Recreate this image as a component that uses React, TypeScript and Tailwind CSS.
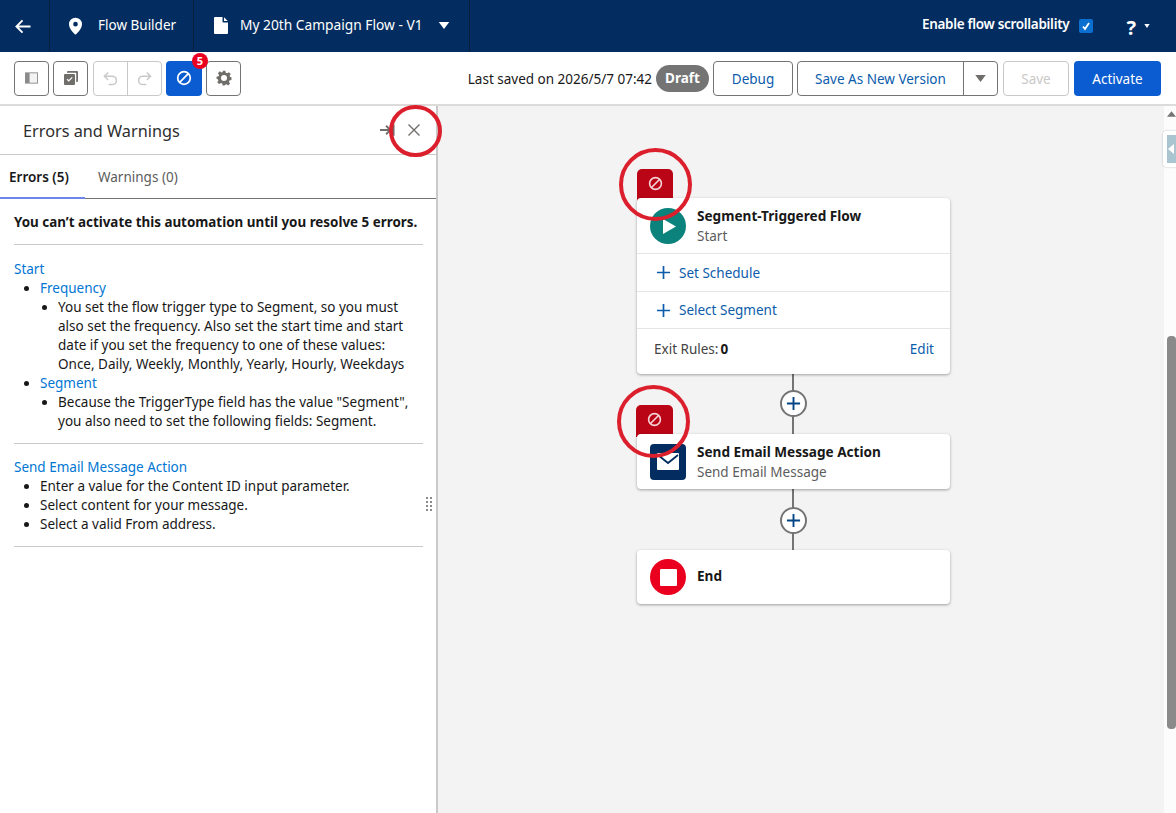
import type { ReactNode } from 'react'

function BlockIcon({ className }: { className: string }) {
  return (
    <svg viewBox="0 0 16 16" className={className} fill="none" stroke="currentColor" strokeWidth="1.7">
      <circle cx="8" cy="8" r="6.3" />
      <path d="M3.7 12.3 12.3 3.7" />
    </svg>
  )
}

function Plus({ className, weight = 1.6 }: { className: string; weight?: number }) {
  return (
    <svg viewBox="0 0 16 16" className={className} fill="none" stroke="currentColor" strokeWidth={weight}>
      <path d="M8 1v14M1 8h14" />
    </svg>
  )
}

function Ring({ className }: { className: string }) {
  return <div className={`absolute z-20 rounded-full border-[4px] border-[#dc1f2c] ${className}`} />
}

function ToolButton({ children }: { children: ReactNode }) {
  return (
    <button className="flex h-[35px] w-[35px] items-center justify-center rounded-[4px] border border-[#747474] bg-white text-[#706e6b]">
      {children}
    </button>
  )
}

function AddRow({ label }: { label: string }) {
  return (
    <div className="flex h-[37.5px] items-center border-t border-[#e5e5e5] pl-[19px] pt-[1px] text-[13.5px] text-[#0b5cab]">
      <Plus className="mr-[8px] h-[15px] w-[15px]" weight={1.8} />
      {label}
    </div>
  )
}

function Connector({ className }: { className: string }) {
  return (
    <div className={`absolute left-[354px] w-[2px] bg-[#747474] ${className}`} />
  )
}

function PlusNode({ className }: { className: string }) {
  return (
    <div className={`absolute left-[342px] flex h-[27px] w-[27px] items-center justify-center rounded-full border-2 border-[#747474] bg-white text-[#014486] ${className}`}>
      <Plus className="h-[15px] w-[15px]" weight={2} />
    </div>
  )
}

export default function App() {
  return (
    <div className="relative flex h-[813px] w-[1176px] flex-col overflow-hidden bg-white font-['Noto_Sans','Open_Sans',sans-serif] text-[13.5px] text-[#181818]">
      <header className="flex h-[52px] shrink-0 items-center bg-[#032d60] text-[13.5px] text-white">
        <div className="flex h-full w-[50px] items-center justify-center border-r border-[#0a1f3c] pr-[4px]">
          <svg viewBox="0 0 18 16" className="h-[15px] w-[18px]" fill="none" stroke="currentColor" strokeWidth="2">
            <path d="M17 8H2M8.5 1.500 2 8l6.500 6.500" />
          </svg>
        </div>
        <div className="flex h-full w-[144px] items-center border-r border-[#0a1f3c] pb-[1px] pl-[19px]">
          <svg viewBox="0 0 14 18" className="mr-[16px] h-[18px] w-[13px]" fill="currentColor">
            <path fillRule="evenodd" d="M7 0a7 7 0 0 0-7 7c0 4.400 5 9.600 6.400 10.800a.9.9 0 0 0 1.200 0C9 16.600 14 11.400 14 7a7 7 0 0 0-7-7Zm0 9.500a2.500 2.500 0 1 1 0-5 2.500 2.500 0 0 1 0 5Z" />
          </svg>
          Flow Builder
        </div>
        <div className="flex h-full w-[276px] items-center border-r border-[#0a1f3c] pb-[1px] pl-[20px] text-[13.75px]">
          <svg viewBox="0 0 14 17" className="mr-[12px] h-[17px] w-[14px]" fill="currentColor">
            <path d="M1 0h7.500v4.500a1 1 0 0 0 1 1H14V16a1 1 0 0 1-1 1H1a1 1 0 0 1-1-1V1a1 1 0 0 1 1-1Z" />
            <path d="M10 .3 13.700 4H10Z" />
          </svg>
          My 20th Campaign Flow - V1
          <svg viewBox="0 0 12 8" className="ml-[15px] h-[7px] w-[12px]" fill="currentColor">
            <path d="M0 0h12L6 8Z" />
          </svg>
        </div>
        <div className="ml-auto flex items-center">
          <span className="mb-[3px] text-[13.5px] font-semibold tracking-[-0.3px]">Enable flow scrollability</span>
          <span className="ml-[10px] flex h-[14px] w-[14px] items-center justify-center rounded-[2px] bg-[#0b6fd0]">
            <svg viewBox="0 0 10 10" className="h-[10px] w-[10px]" fill="none" stroke="white" strokeWidth="1.8">
              <path d="M2 5.500 4 8l4-6" />
            </svg>
          </span>
          <span className="ml-[33px] mt-[4px] text-[20px] font-bold leading-none">?</span>
          <svg viewBox="0 0 8 6" className="ml-[8px] mr-[26px] h-[4px] w-[6px]" fill="currentColor">
            <path d="M0 0h8L4 6Z" />
          </svg>
        </div>
      </header>

      <div className="flex h-[54px] shrink-0 items-center border-b-2 border-[#dddbda] pl-[14px] pr-[15px]">
        <ToolButton>
          <svg viewBox="0 0 14 12" className="h-[12px] w-[13px]">
            <rect x="0.500" y="0.500" width="13" height="11" fill="#a5a5a5" stroke="#8a8a8a" />
            <rect x="1" y="1" width="4" height="10" fill="#8a8a8a" />
            <rect x="5" y="1" width="8" height="10" fill="#f3f3f3" />
          </svg>
        </ToolButton>
        <div className="ml-[4px]">
          <ToolButton>
            <svg viewBox="0 0 14 14" className="h-[14px] w-[14px]" fill="#706e6b">
              <path d="M4 0h9a1 1 0 0 1 1 1v9a1 1 0 0 1-1 1h-.8V2.500A.8.8 0 0 0 11.500 1.800H3V1a1 1 0 0 1 1-1Z" />
              <path fillRule="evenodd" d="M1 3h9a1 1 0 0 1 1 1v9a1 1 0 0 1-1 1H1a1 1 0 0 1-1-1V4a1 1 0 0 1 1-1Zm1.600 5.500 2.100 2.200 3.900-4-.8-.8-3.100 3.200-1.300-1.400Z" />
            </svg>
          </ToolButton>
        </div>
        <div className="ml-[5px] flex h-[35px] w-[69px] rounded-[4px] border border-[#c9c9c9] text-[#c9c9c9]">
          <div className="flex flex-1 items-center justify-center border-r border-[#c9c9c9]">
            <svg viewBox="0 0 16 16" className="h-[15px] w-[15px]" fill="none" stroke="currentColor" strokeWidth="1.6">
              <path d="M5.500 1.500 1.500 5.500l4 4M1.800 5.500h8a4.500 4.500 0 0 1 0 9H6" />
            </svg>
          </div>
          <div className="flex flex-1 items-center justify-center">
            <svg viewBox="0 0 16 16" className="h-[15px] w-[15px]" fill="none" stroke="currentColor" strokeWidth="1.6">
              <path d="m10.500 1.500 4 4-4 4M14.200 5.500h-8a4.500 4.500 0 0 0 0 9H10" />
            </svg>
          </div>
        </div>
        <div className="relative ml-[4px] flex h-[35px] w-[36px] items-center justify-center rounded-[4px] bg-[#0b5cd0] text-white">
          <BlockIcon className="h-[16px] w-[16px]" />
          <span className="absolute right-[-6px] top-[-8px] flex h-[16px] w-[16px] items-center justify-center rounded-full bg-[#ea001e] text-[11px] font-bold leading-none">5</span>
        </div>
        <div className="ml-[4px]">
          <ToolButton>
            <svg viewBox="0 0 24 24" className="h-[16px] w-[16px]" fill="#706e6b">
              <path fillRule="evenodd" d="M10 1h4l.7 3.100 1.900.8 2.700-1.700 2.800 2.800-1.700 2.700.8 1.900L23.200 11v4l-3 .7-.8 1.900 1.700 2.700-2.800 2.800-2.700-1.700-1.900.8L13 23.200h-3l-.7-3-1.900-.8-2.700 1.700-2.800-2.800 1.700-2.700-.8-1.900L.8 13v-3l3-.7.8-1.900-1.700-2.700 2.800-2.800 2.700 1.700 1.900-.8ZM12 16.500a4.500 4.500 0 1 0 0-9 4.500 4.500 0 0 0 0 9Z" />
            </svg>
          </ToolButton>
        </div>

        <span className="ml-auto pt-[2px]">Last saved on 2026/5/7 07:42</span>
        <span className="ml-[4px] flex h-[27px] w-[53px] items-center justify-center rounded-full bg-[#747474] pt-[1px] font-bold text-white">Draft</span>
        <button className="ml-[4px] h-[35px] w-[80px] rounded-[4px] border border-[#747474] pt-[2px] text-[#0b5cab]">Debug</button>
        <div className="ml-[4px] flex h-[35px] w-[201px] rounded-[4px] border border-[#747474]">
          <span className="flex w-[166px] items-center justify-center border-r border-[#747474] pt-[2px] text-[#0b5cab]">Save As New Version</span>
          <span className="flex flex-1 items-center justify-center">
            <svg viewBox="0 0 12 8" className="h-[7px] w-[11px]" fill="#706e6b">
              <path d="M0 0h12L6 8Z" />
            </svg>
          </span>
        </div>
        <button className="ml-[5px] h-[35px] w-[66px] rounded-[4px] border border-[#c9c9c9] pt-[2px] text-[#c9c9c9]">Save</button>
        <button className="ml-[5px] h-[35px] w-[87px] rounded-[4px] bg-[#0b5cd0] pt-[2px] text-white">Activate</button>
      </div>

      <div className="flex min-h-0 flex-1">
        <aside className="relative w-[438px] shrink-0 border-r-2 border-[#c9c9c9]">
          <div className="flex h-[49px] items-center border-b border-[#c9c9c9] pl-[23px] pr-[16px]">
            <h1 className="pt-[2px] text-[16.25px] font-normal text-[#2e2e2e]">Errors and Warnings</h1>
            <svg viewBox="0 0 16 12" className="ml-auto h-[12px] w-[15px]" fill="none" stroke="#706e6b" strokeWidth="2">
              <path d="M0 6h11M6.500 1.500 11 6l-4.500 4.500M14.500 0v12" />
            </svg>
            <svg viewBox="0 0 12 12" className="ml-[13px] h-[12px] w-[12px]" fill="none" stroke="#706e6b" strokeWidth="1.4">
              <path d="m.5.500 11 11M11.500.500l-11 11" />
            </svg>
          </div>
          <div className="flex h-[44px] items-center border-b border-[#747474]">
            <div className="relative flex h-full w-[85px] items-center pl-[9px] pt-[1px] font-semibold">
              Errors (5)
              <span className="absolute bottom-[-1px] left-0 h-[2px] w-full bg-[#6d84e8]" />
            </div>
            <span className="ml-[13px] pt-[1px] text-[#5c5c5c]">Warnings (0)</span>
          </div>
          <div className="pl-[14px] pr-[13px] leading-[19px]">
            <p className="border-b border-[#c9c9c9] pb-[12px] pt-[14px] text-[13.4px] font-bold">You can’t activate this automation until you resolve 5 errors.</p>
            <div className="border-b border-[#c9c9c9] pb-[12px] pt-[15px]">
              <a className="text-[#0176d3]">Start</a>
              <ul className="list-disc pl-[26px]">
                <li>
                  <a className="text-[#0176d3]">Frequency</a>
                  <ul className="list-disc pl-[18px]">
                    <li>You set the flow trigger type to Segment, so you must also set the frequency. Also set the start time and start date if you set the frequency to one of these values: Once, Daily, Weekly, Monthly, Yearly, Hourly, Weekdays</li>
                  </ul>
                </li>
                <li>
                  <a className="text-[#0176d3]">Segment</a>
                  <ul className="list-disc pl-[18px]">
                    <li>Because the TriggerType field has the value "Segment", you also need to set the following fields: Segment.</li>
                  </ul>
                </li>
              </ul>
            </div>
            <div className="border-b border-[#c9c9c9] pb-[12px] pt-[14px]">
              <a className="text-[#0176d3]">Send Email Message Action</a>
              <ul className="list-disc pl-[26px]">
                <li>Enter a value for the Content ID input parameter.</li>
                <li>Select content for your message.</li>
                <li>Select a valid From address.</li>
              </ul>
            </div>
          </div>
          <div className="absolute right-[4px] top-[391px] grid grid-cols-2 gap-x-[2px] gap-y-[2px]">
            {[0, 1, 2, 3, 4, 5, 6, 7].map(i => (
              <span key={i} className="h-[2px] w-[2px] bg-[#8a8a8a]" />
            ))}
          </div>
        </aside>

        <main className="relative flex-1 bg-[#f3f3f3]">
          <Connector className="top-[268px] h-[60px]" />
          <Connector className="top-[383px] h-[62px]" />
          <PlusNode className="top-[284px]" />
          <PlusNode className="top-[401px]" />

          <div className="absolute left-[199px] top-[63px] h-[32px] w-[36px] rounded-t-[5px] bg-[#ba0517] pt-[7px]">
            <BlockIcon className="mx-auto h-[15px] w-[15px] text-[#f5d5d8]" />
          </div>
          <div className="absolute left-[198px] top-[299px] h-[32px] w-[37px] rounded-t-[5px] bg-[#ba0517] pt-[7px]">
            <BlockIcon className="mx-auto h-[15px] w-[15px] text-[#f5d5d8]" />
          </div>

          <section className="absolute left-[199px] top-[92px] w-[313px] rounded-[4px] bg-white shadow-[0_1px_3px_rgba(0,0,0,0.35)]">
            <div className="flex h-[55px] items-center pl-[13px]">
              <span className="mt-[1px] flex h-[36px] w-[36px] items-center justify-center rounded-full bg-[#0b827c]">
                <svg viewBox="0 0 14 16" className="ml-[2px] h-[15px] w-[13px]" fill="white">
                  <path d="M0 0 14 8 0 16Z" />
                </svg>
              </span>
              <div className="ml-[11px] mt-[1px]">
                <div className="text-[13.6px] font-bold leading-[20px]">Segment-Triggered Flow</div>
                <div className="leading-[20px] text-[#5c5c5c]">Start</div>
              </div>
            </div>
            <AddRow label="Set Schedule" />
            <AddRow label="Select Segment" />
            <div className="flex h-[46px] items-center justify-between border-t border-[#e5e5e5] pb-[5px] pl-[17px] pr-[16px]">
              <span className="text-[#444]">Exit Rules:<b className="ml-[2px] text-[#181818]">0</b></span>
              <span className="text-[#0b5cab]">Edit</span>
            </div>
          </section>

          <section className="absolute left-[199px] top-[328px] flex h-[55px] w-[313px] items-center rounded-[4px] bg-white pl-[13px] shadow-[0_1px_3px_rgba(0,0,0,0.35)]">
            <span className="flex h-[36px] w-[36px] items-center justify-center rounded-[4px] bg-[#032d60]">
              <svg viewBox="0 0 22 17" className="h-[17px] w-[22px]">
                <rect width="22" height="17" rx="1" fill="white" />
                <path d="M1 2l10 8 10-8" fill="none" stroke="#032d60" strokeWidth="1.800" />
              </svg>
            </span>
            <div className="ml-[11px]">
              <div className="text-[13.6px] font-bold leading-[20px]">Send Email Message Action</div>
              <div className="leading-[20px] text-[#5c5c5c]">Send Email Message</div>
            </div>
          </section>

          <section className="absolute left-[199px] top-[444px] flex h-[54px] w-[313px] items-center rounded-[4px] bg-white pl-[13px] shadow-[0_1px_3px_rgba(0,0,0,0.35)]">
            <span className="flex h-[36px] w-[36px] items-center justify-center rounded-full bg-[#ea001e]">
              <span className="h-[17px] w-[17px] rounded-[1px] bg-white" />
            </span>
            <span className="mb-[1px] ml-[11px] text-[13.6px] font-bold">End</span>
          </section>

          <div className="absolute right-0 top-0 h-full w-[12px] bg-[#fcfcfc]">
            <svg viewBox="0 0 10 6" className="ml-[3px] mt-[5px] h-[6px] w-[9px]" fill="#747474">
              <path d="M5 0l5 6H0Z" />
            </svg>
            <div className="absolute left-[3px] top-[230px] h-[393px] w-[9px] rounded-t-[4px] rounded-b-[4px] bg-[#8a8a8a]" />
          </div>
          <div className="absolute right-0 top-[25px] h-[36px] w-[13px] rounded-l-[4px] border-y-[4px] border-l-[4px] border-white bg-[#a9c6d0] shadow-[0_0_2px_rgba(0,0,0,0.3)]">
            <span className="ml-[1px] mt-[9px] block h-0 w-0 border-y-[5px] border-r-[6px] border-y-transparent border-r-white" />
          </div>
        </main>
      </div>

      <Ring className="left-[389px] top-[105px] h-[52px] w-[53px]" />
      <Ring className="left-[619px] top-[148px] h-[73px] w-[73px]" />
      <Ring className="left-[617px] top-[385px] h-[73px] w-[73px]" />
    </div>
  )
}
